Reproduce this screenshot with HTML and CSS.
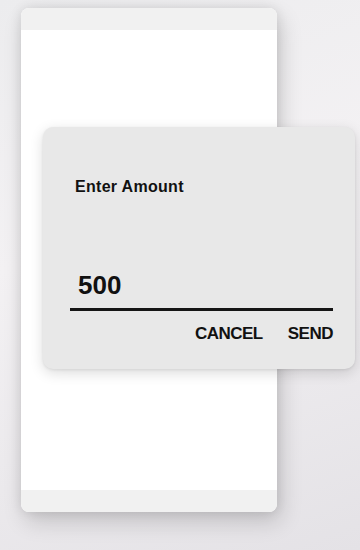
FILE: index.html
```html
<!DOCTYPE html>
<html lang="en">
<head>
  <meta charset="UTF-8" />
  <meta name="viewport" content="width=device-width, initial-scale=1.0"/>
  <title>Enter Amount</title>
  <link rel="stylesheet" href="styles.css">
</head>
<body>
  <!-- Phone screen behind the dialog -->
  <div class="screen">
    <div class="screen-bar"></div>
    <div class="screen-body"></div>
    <div class="screen-bar"></div>
  </div>

  <!-- Amount dialog -->
  <div class="dialog">
    <h2 class="dialog-title">Enter Amount</h2>
    <div class="amount-field">
      <span class="amount-value">500</span>
    </div>
    <div class="dialog-actions">
      <button class="action">CANCEL</button>
      <button class="action">SEND</button>
    </div>
  </div>
</body>
</html>
```

FILE: styles.css
```css
body {
  margin: 0;
  width: 360px;
  height: 550px;
  padding: 8px 0 0 21px;
  box-sizing: border-box;
  background: linear-gradient(160deg, #ececee 0%, #f3f1f3 40%, #e4e2e6 100%);
  font-family: "Liberation Sans", Arial, sans-serif;
  position: relative;
  overflow: hidden;
}

.screen {
  width: 256px;
  height: 504px;
  border-radius: 8px;
  overflow: hidden;
  display: flex;
  flex-direction: column;
  background: #fff;
  box-shadow: 4px 10px 22px rgba(0, 0, 0, 0.16), 0 0 12px rgba(0, 0, 0, 0.1);
}

.screen-bar {
  height: 22px;
  background: #f1f1f1;
}

.screen-body {
  flex: 1;
  background: #fff;
}

.dialog {
  position: absolute;
  left: 43px;
  top: 127px;
  width: 312px;
  height: 242px;
  box-sizing: border-box;
  padding: 50px 22px 0 27px;
  background: #e8e8e8;
  border-radius: 10px;
  box-shadow: 0 4px 14px rgba(0, 0, 0, 0.14), 0 1px 3px rgba(0, 0, 0, 0.08);
  display: flex;
  flex-direction: column;
}

.dialog-title {
  margin: 0 0 0 5px;
  font-size: 16px;
  line-height: 20px;
  font-weight: bold;
  color: #111;
  letter-spacing: 0.3px;
}

.amount-field {
  margin-top: 73px;
  padding: 0 0 8px 8px;
  border-bottom: 3px solid #151515;
}

.amount-value {
  font-size: 26px;
  line-height: 30px;
  font-weight: bold;
  color: #111;
  display: block;
}

.dialog-actions {
  margin-top: 13px;
  display: flex;
  justify-content: flex-end;
  gap: 25px;
}

.action {
  margin: 0;
  padding: 0;
  border: none;
  background: none;
  font-family: inherit;
  font-size: 17px;
  line-height: 20px;
  font-weight: bold;
  letter-spacing: -0.5px;
  color: #111;
  cursor: pointer;
}
```
